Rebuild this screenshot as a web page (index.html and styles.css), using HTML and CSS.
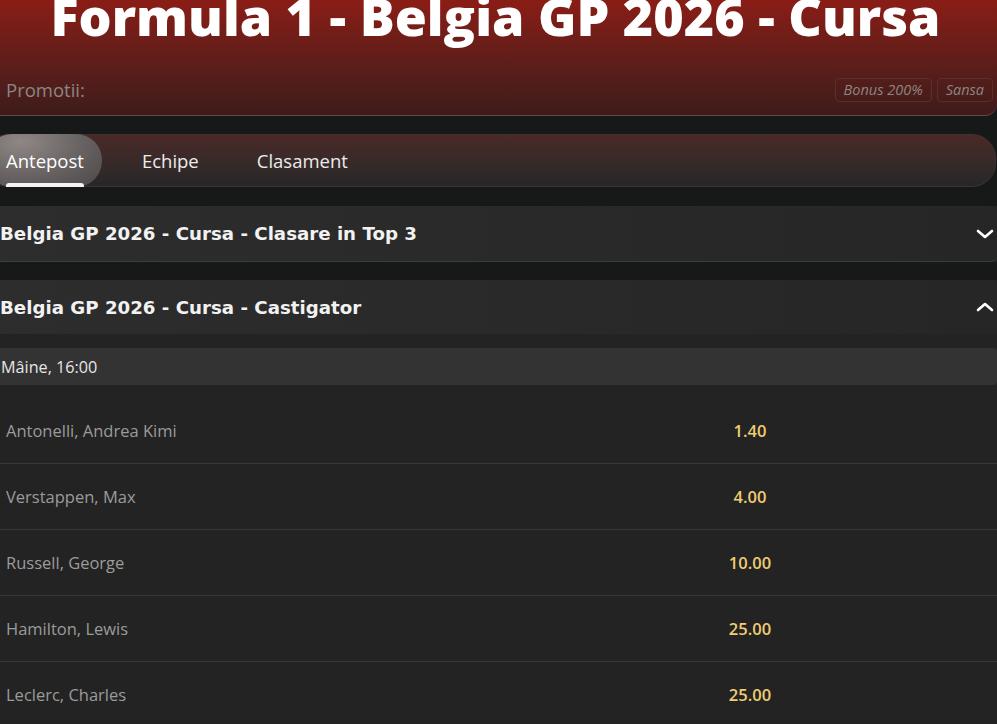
FILE: index.html
```html
<!DOCTYPE html>
<html lang="ro">
<head>
    <meta charset="UTF-8">
    <meta name="viewport" content="width=device-width, initial-scale=1.0">
    <title>Formula 1 - Belgia GP 2026 - Cursa</title>
    <link rel="stylesheet" href="styles.css">
</head>
<body>
    <div class="page">
        <header class="event-head">
            <h1 class="event-title">Formula 1 - Belgia GP 2026 - Cursa</h1>
            <div class="promo-row">
                <span class="promo-label">Promotii:</span>
                <div class="promo-tags">
                    <span class="tag">Bonus 200%</span>
                    <span class="tag">Sansa</span>
                </div>
            </div>
        </header>

        <nav class="tabs">
            <a class="tab active" href="#">Antepost</a>
            <a class="tab" href="#">Echipe</a>
            <a class="tab" href="#">Clasament</a>
        </nav>

        <!-- piata inchisa -->
        <section class="market">
            <div class="market-head">
                <h3>Belgia GP 2026 - Cursa - Clasare in Top 3</h3>
                <svg class="chevron" width="18" height="12" viewBox="0 0 18 12">
                    <path d="M2 3 L9 9 L16 3" fill="none" stroke="#fff" stroke-width="2.6" stroke-linecap="round" stroke-linejoin="round"/>
                </svg>
            </div>
        </section>

        <!-- piata deschisa -->
        <section class="market open">
            <div class="market-head">
                <h3>Belgia GP 2026 - Cursa - Castigator</h3>
                <svg class="chevron" width="18" height="12" viewBox="0 0 18 12">
                    <path d="M2 9 L9 3 L16 9" fill="none" stroke="#fff" stroke-width="2.6" stroke-linecap="round" stroke-linejoin="round"/>
                </svg>
            </div>
            <div class="market-body">
                <div class="event-date">Mâine, 16:00</div>
                <div class="selections">
                    <div class="selection">
                        <span class="name">Antonelli, Andrea Kimi</span>
                        <span class="odd">1.40</span>
                    </div>
                    <div class="selection">
                        <span class="name">Verstappen, Max</span>
                        <span class="odd">4.00</span>
                    </div>
                    <div class="selection">
                        <span class="name">Russell, George</span>
                        <span class="odd">10.00</span>
                    </div>
                    <div class="selection">
                        <span class="name">Hamilton, Lewis</span>
                        <span class="odd">25.00</span>
                    </div>
                    <div class="selection">
                        <span class="name">Leclerc, Charles</span>
                        <span class="odd">25.00</span>
                    </div>
                </div>
            </div>
        </section>
    </div>
</body>
</html>
```

FILE: styles.css
```css
body {
    margin: 0;
    padding: 0;
    background-color: #171818;
    font-family: 'Open Sans', 'Noto Sans', sans-serif;
    color: #fff;
    overflow: hidden;
}
.page {
    width: 1013px;
    margin-left: -16px;
}
.event-head {
    display: flow-root;
    background: linear-gradient(180deg, #8a1d16 0%, #5e1e1a 55%, #3d1c1b 100%);
    border-bottom: 1px solid #6a4542;
    border-radius: 0 0 12px 12px;
    height: 116px;
    box-sizing: border-box;
}
.event-title {
    margin: 0;
    margin-top: -15px;
    text-align: center;
    padding-left: 10px;
    font-size: 52px;
    font-weight: 800;
    line-height: 62px;
    letter-spacing: 0;
    white-space: nowrap;
}
.promo-row {
    display: flex;
    align-items: center;
    justify-content: space-between;
    padding: 30px 4px 0 22px;
}
.promo-label {
    font-size: 18.5px;
    color: #8e8682;
}
.promo-tags {
    display: flex;
    gap: 5px;
}
.tag {
    font-style: italic;
    font-size: 14.5px;
    color: #8f8480;
    border: 1px solid #5a2f2c;
    border-radius: 4px;
    padding: 1px 8px;
    line-height: 20px;
}
.tabs {
    display: flex;
    gap: 20px;
    margin-top: 18px;
    height: 53px;
    box-sizing: border-box;
    padding-left: 1px;
    border: 1px solid #3e3433;
    border-radius: 24px;
    background: linear-gradient(180deg, #4a2927 0%, #3a2a29 45%, #262727 100%);
    width: 1012px;
}
.tab {
    display: flex;
    align-items: center;
    padding: 0 18px 0 20px;
    font-size: 18.5px;
    color: #ececec;
    text-decoration: none;
    position: relative;
    border-radius: 26px;
    margin: -1px 0;
}
.tab.active {
    background: radial-gradient(ellipse at 30% 15%, #8f8786 0%, #6a6564 50%, #4a4746 100%);
    color: #fff;
}
.tab.active::after {
    content: "";
    position: absolute;
    left: 20px;
    right: 18px;
    bottom: 0;
    height: 4px;
    border-radius: 3px 3px 0 0;
    background: #f4f4f4;
}
.market {
    margin-top: 19px;
    background-color: #232323;
}
.market-head {
    display: flex;
    align-items: center;
    justify-content: space-between;
    height: 55px;
    padding: 0 3px 0 16px;
    background: linear-gradient(90deg, #2d2d2d, #262626);
    border-bottom: 1px solid #3c3c3c;
    border-radius: 0 6px 6px 0;
}
.market.open .market-head {
    border-bottom: none;
    height: 54px;
    border-radius: 0 6px 0 0;
}
.market + .market {
    margin-top: 18px;
}
.market-head h3 {
    margin: 0;
    font-family: 'DejaVu Sans', sans-serif;
    font-size: 18.2px;
    font-weight: bold;
    color: #f2f2f2;
}
.market-body {
    padding-top: 14px;
}
.event-date {
    background-color: #333333;
    height: 37px;
    display: flex;
    align-items: center;
    padding-left: 17px;
    font-size: 16.2px;
    color: #e6e6e6;
    border-radius: 0 4px 4px 0;
}
.selections {
    padding-top: 13px;
}
.selection {
    display: grid;
    grid-template-columns: 1fr 100px 197px;
    align-items: center;
    height: 66px;
    box-sizing: border-box;
    border-bottom: 1px solid #383838;
}
.selection .name {
    padding-left: 22px;
    font-size: 16.5px;
    color: #9b9b9b;
}
.selection .odd {
    text-align: center;
    font-size: 16.5px;
    font-weight: 600;
    color: #f0cc72;
}
```
